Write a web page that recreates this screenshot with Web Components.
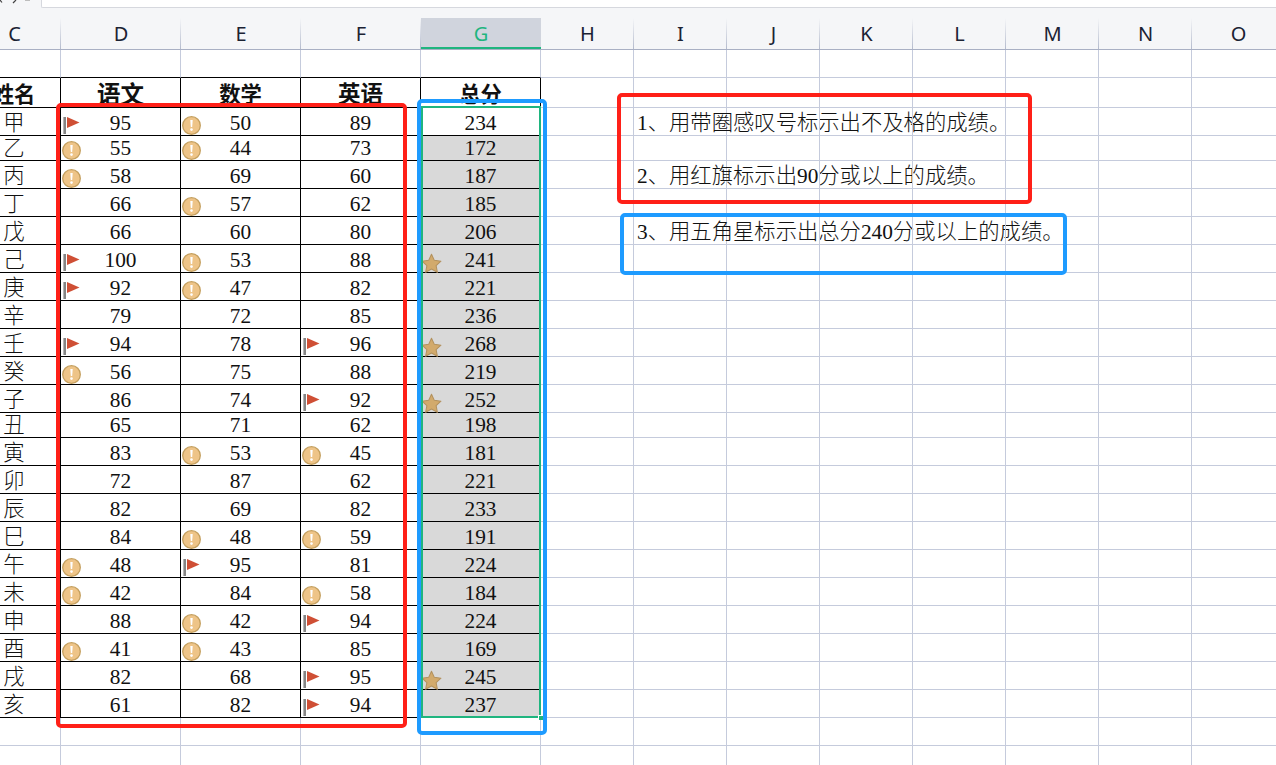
<!DOCTYPE html>
<html>
<head>
<meta charset="utf-8">
<style>
  html, body { margin: 0; height: 100%; overflow: hidden; background: #fff; }
</style>
</head>
<body>
<sheet-app>
  <column-bar>
    <col-head style="width:61px" offset="-32">C</col-head>
    <col-head style="width:120px">D</col-head>
    <col-head style="width:120px">E</col-head>
    <col-head style="width:120px">F</col-head>
    <col-head style="width:120px" active>G</col-head>
    <col-head style="width:93px">H</col-head>
    <col-head style="width:93px">I</col-head>
    <col-head style="width:93px">J</col-head>
    <col-head style="width:93px">K</col-head>
    <col-head style="width:93px">L</col-head>
    <col-head style="width:93px">M</col-head>
    <col-head style="width:93px">N</col-head>
    <col-head style="width:93px">O</col-head>
  </column-bar>
  <score-sheet></score-sheet>
  <mark-box style="left:56px;top:103px;width:351px;height:625px;--c:#ff2018;--w:4px"></mark-box>
  <mark-box style="left:421px;top:106px;width:120px;height:612px;--c:#1fb57f;--w:2px;--r:0"></mark-box>
  <mark-box style="left:417px;top:99px;width:130px;height:636px;--c:#1e9bff;--w:4px"></mark-box>
  <mark-box style="left:617px;top:93px;width:415px;height:111px;--c:#ff2018;--w:4px"></mark-box>
  <mark-box style="left:620px;top:213px;width:447px;height:62px;--c:#1e9bff;--w:4px"></mark-box>
  <fill-handle></fill-handle>
</sheet-app>

<script>
const icons = {
  flag: `<svg width="19" height="19" viewBox="0 0 19 19"><rect x="1" y="1" width="3" height="17" fill="#858585"/><rect x="1" y="1" width="1" height="17" fill="#b5b5b5"/><path d="M5 1 L17.5 6.5 L5 12 Z" fill="#cf4f35"/></svg>`,
  warn: `<svg width="19" height="19" viewBox="0 0 19 19"><circle cx="9.5" cy="9.5" r="8.8" fill="#eec488" stroke="#c49f5e" stroke-width="1.3"/><path d="M8.3 4 H10.7 L10.2 11 H8.8 Z" fill="#fff"/><circle cx="9.5" cy="13.6" r="1.3" fill="#fff"/></svg>`,
  star: `<svg width="21" height="21" viewBox="0 0 20 20"><path d="M10 1.2 L12.7 7 L19 7.8 L14.4 12.1 L15.6 18.4 L10 15.3 L4.4 18.4 L5.6 12.1 L1 7.8 L7.3 7 Z" fill="#d2aa6c" stroke="#b3925f" stroke-width="1" stroke-linejoin="round"/></svg>`
};

class SheetApp extends HTMLElement {
  constructor() {
    super();
    this.attachShadow({ mode: 'open' }).innerHTML = `
      <style>
        :host { display: block; position: relative; width: 1276px; height: 765px; overflow: hidden; background: #fff; }
        .top { display: flex; height: 8px; background: #f5f6f8; }
        .tools { width: 41px; line-height: 0; }
        .input { flex: 1; box-sizing: border-box; background: #fff; border-left: 1px solid #d6d8de; border-bottom: 1px solid #d6d8de; border-bottom-left-radius: 2px; }
      </style>
      <div class="top">
        <div class="tools">
          <svg width="41" height="8" viewBox="0 0 41 8"><path d="M0 0 L2 2.5 M13 3 L16 0" stroke="#444" stroke-width="1.2" fill="none"/><path d="M25 0 H30" stroke="#aaa" stroke-width="1.5"/></svg>
        </div>
        <div class="input"></div>
      </div>
      <slot></slot>`;
  }
}

class ColumnBar extends HTMLElement {
  constructor() {
    super();
    this.attachShadow({ mode: 'open' }).innerHTML = `
      <style>
        :host { display: flex; height: 42px; background: #f5f6f8; box-sizing: border-box; border-bottom: 1px solid #a9b0c4; }
      </style>
      <slot></slot>`;
  }
}

class ColHead extends HTMLElement {
  constructor() {
    super();
    this.attachShadow({ mode: 'open' }).innerHTML = `
      <style>
        :host { display: flex; flex: none; box-sizing: border-box; height: 41px; padding-top: 10px; position: relative; }
        .label { flex: 1; display: flex; align-items: center; justify-content: center;
          font: 20px "Noto Sans", sans-serif; color: #1b2233; }
        .sep { position: absolute; right: 0; top: 10px; bottom: 0; width: 1px; background: linear-gradient(#f5f6f8, #b4bbcd); }
        :host([active]) { background: linear-gradient(#f5f6f8 10px, #d0d4dd 10px); box-shadow: inset 0 -2px 0 #1fb57f; }
        :host([active]) .label { color: #1fb57f; }
        :host([active]) .sep { display: none; }
      </style>
      <div class="label"><slot></slot></div><div class="sep"></div>`;
    const off = this.getAttribute('offset');
    if (off) this.shadowRoot.querySelector('.label').style.paddingRight = -off + 'px';
  }
}

// name, three scores and total; w = warn, f = flag, s = star
const rows = [
  ['甲','95f','50w','89','234'], ['乙','55w','44w','73','172'], ['丙','58w','69','60','187'],
  ['丁','66','57w','62','185'], ['戊','66','60','80','206'], ['己','100f','53w','88','241s'],
  ['庚','92f','47w','82','221'], ['辛','79','72','85','236'], ['壬','94f','78','96f','268s'],
  ['癸','56w','75','88','219'], ['子','86','74','92f','252s'], ['丑','65','71','62','198'],
  ['寅','83','53w','45w','181'], ['卯','72','87','62','221'], ['辰','82','69','82','233'],
  ['巳','84','48w','59w','191'], ['午','48w','95f','81','224'], ['未','42w','84','58w','184'],
  ['申','88','42w','94f','224'], ['酉','41w','43w','85','169'], ['戌','82','68','95f','245s'],
  ['亥','61','82','94f','237']
];
const heights = [28, 30, 28, 25, 28, 28, 28, 28, 28, 28, 28, 28, 28, 25, 28, 28, 28, 28, 28, 28, 28, 28, 28, 28, 28, 20];
const headSizes = [21.33, 23.5, 21.33, 22.5, 21.33];
const notes = { 2: '1、用带圈感叹号标示出不及格的成绩。', 4: '2、用红旗标示出90分或以上的成绩。', 6: '3、用五角星标示出总分240分或以上的成绩。' };
const kinds = { w: 'warn', f: 'flag', s: 'star' };

class ScoreSheet extends HTMLElement {
  constructor() {
    super();
    this.attachShadow({ mode: 'open' }).innerHTML = `
      <style>
        :host { display: grid; grid-template-columns: 61px repeat(4, 120px) repeat(8, 93px);
          grid-template-rows: ${heights.map(h => h + 'px').join(' ')};
          font: 300 21.33px "Liberation Serif", "Noto Sans CJK SC", serif; color: #111; }
        .c { box-sizing: border-box; position: relative; border-right: 1px solid #c5cbdc; border-bottom: 1px solid #c5cbdc;
          display: flex; align-items: flex-end; justify-content: center; white-space: nowrap; line-height: 24px; }
        .t { border-color: #000; }
        .tb { border-bottom-color: #000; }
        .first { padding-right: 32px; }
        .head { font-weight: 700; }
        .gray { background: #d9d9d9; }
        .note { justify-content: flex-start; padding-left: 3px; }
        .ico { position: absolute; left: 1px; bottom: 0; line-height: 0; }
        .ico.star { left: 0; bottom: -2px; }
      </style>`;
    const root = this.shadowRoot;
    heights.forEach((h, r) => {
      const data = r === 1 ? ['姓名', '语文', '数学', '英语', '总分'] : rows[r - 2];
      for (let col = 0; col < 13; col++) {
        const cell = document.createElement('div');
        cell.className = 'c';
        if (r === 0 && col < 5) cell.classList.add('tb');
        if (data && col < 5) {
          cell.classList.add('t');
          if (col === 0) cell.classList.add('first');
          if (r === 1) {
            cell.classList.add('head');
            cell.style.fontSize = headSizes[col] + 'px';
          }
          const m = /^(\D*?\d*)([wfs]?)$/.exec(data[col]);
          const span = document.createElement('span');
          span.textContent = r === 1 || col === 0 ? data[col] : m[1];
          cell.appendChild(span);
          if (r > 1 && col > 0 && m[2]) {
            const ico = document.createElement('span');
            ico.className = 'ico ' + kinds[m[2]];
            ico.innerHTML = icons[kinds[m[2]]];
            cell.appendChild(ico);
          }
          if (col === 4 && r > 2) cell.classList.add('gray');
        }
        if (col === 6 && notes[r]) {
          cell.classList.add('note');
          cell.textContent = notes[r];
        }
        root.appendChild(cell);
      }
    });
  }
}

class MarkBox extends HTMLElement {
  constructor() {
    super();
    this.attachShadow({ mode: 'open' }).innerHTML = `
      <style>
        :host { position: absolute; box-sizing: border-box; border: var(--w) solid var(--c); border-radius: var(--r, 5px); pointer-events: none; }
      </style>`;
  }
}

class FillHandle extends HTMLElement {
  constructor() {
    super();
    this.attachShadow({ mode: 'open' }).innerHTML = `
      <style>
        :host { position: absolute; left: 538px; top: 715px; width: 4px; height: 4px; background: #1fb57f; border-left: 1px solid #fff; border-top: 1px solid #fff; }
      </style>`;
  }
}

customElements.define('sheet-app', SheetApp);
customElements.define('column-bar', ColumnBar);
customElements.define('col-head', ColHead);
customElements.define('score-sheet', ScoreSheet);
customElements.define('mark-box', MarkBox);
customElements.define('fill-handle', FillHandle);
</script>
</body>
</html>
